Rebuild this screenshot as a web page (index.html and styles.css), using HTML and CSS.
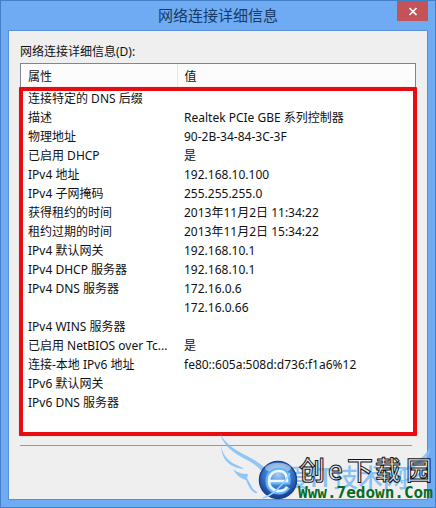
FILE: index.html
```html
<!DOCTYPE html>
<html lang="zh-CN">
<head>
<meta charset="utf-8">
<meta name="viewport" content="width=device-width, initial-scale=1">
<title>网络连接详细信息</title>
<link rel="stylesheet" href="styles.css">
</head>
<body>
<main class="window">
  <header class="titlebar">
    <h1 class="title">网络连接详细信息</h1>
    <button class="close" type="button" aria-label="关闭">
      <svg width="10" height="9" viewBox="0 0 10 9" aria-hidden="true"><path d="M1.500 1l7 7M8.500 1l-7 7" stroke="#fff" stroke-width="1.700" fill="none"/></svg>
    </button>
  </header>
  <section class="client">
    <h2 class="label" id="list-label">网络连接详细信息(D):</h2>
    <div class="list">
      <table class="details" aria-labelledby="list-label">
        <thead><tr><th class="prop">属性</th><th>值</th></tr></thead>
        <tbody>
          <tr><td>连接特定的 DNS 后缀</td><td></td></tr>
          <tr><td>描述</td><td>Realtek PCIe GBE 系列控制器</td></tr>
          <tr><td>物理地址</td><td>90-2B-34-84-3C-3F</td></tr>
          <tr><td>已启用 DHCP</td><td>是</td></tr>
          <tr><td>IPv4 地址</td><td>192.168.10.100</td></tr>
          <tr><td>IPv4 子网掩码</td><td>255.255.255.0</td></tr>
          <tr><td>获得租约的时间</td><td>2013年11月2日 11:34:22</td></tr>
          <tr><td>租约过期的时间</td><td>2013年11月2日 15:34:22</td></tr>
          <tr><td>IPv4 默认网关</td><td>192.168.10.1</td></tr>
          <tr><td>IPv4 DHCP 服务器</td><td>192.168.10.1</td></tr>
          <tr><td>IPv4 DNS 服务器</td><td>172.16.0.6</td></tr>
          <tr><td></td><td>172.16.0.66</td></tr>
          <tr><td>IPv4 WINS 服务器</td><td></td></tr>
          <tr><td>已启用 NetBIOS over Tc...</td><td>是</td></tr>
          <tr><td>连接-本地 IPv6 地址</td><td>fe80::605a:508d:d736:f1a6%12</td></tr>
          <tr><td>IPv6 默认网关</td><td></td></tr>
          <tr><td>IPv6 DNS 服务器</td><td></td></tr>
        </tbody>
      </table>
      <div class="highlight"></div>
    </div>
    <hr class="rule">
  </section>
  <svg class="watermark" width="216" height="76" viewBox="220 432 216 76" role="img" aria-label="创e下载园 Www.7edown.Com">
    <defs>
      <radialGradient id="globe" cx="50%" cy="35%" r="65%">
        <stop offset="0" stop-color="#a9cff3"/>
        <stop offset=".5" stop-color="#3f80cf"/>
        <stop offset="1" stop-color="#123b8c"/>
      </radialGradient>
    </defs>
    <g fill="#7fc0f7" opacity=".85">
      <path d="M220 433c4 10 15 17 27 23 9 5 16 9 21 15l-3 4c-6-8-12-12-20-16-13-7-22-14-25-26z"/>
      <path d="M221 445c1 11 9 18 20 22l3 2c-13-1-23-9-23-24z"/>
      <path d="M233 469c5 4 9 5 15 5l-1 4 6 11 5 4-3 0c-5-3-7-8-9-13-6-2-10-5-13-11z"/>
      <path d="M430 447c-5 10-17 18-32 25 12-2 22-7 29-14 3-4 4-7 3-11z"/>
      <path d="M428 464c-6 9-16 14-28 17 13 1 24-5 28-17z"/>
    </g>
    <text class="mark-under" x="260" y="487">我爱IT技术网</text>
    <circle cx="278" cy="480" r="18.500" fill="url(#globe)" stroke="#1b4193" stroke-width="1.500"/>
    <ellipse cx="278" cy="468" rx="13" ry="5" fill="#fff" opacity=".4"/>
    <path d="M268 482h20c1-8-3-12-9-12-7 0-11 5-11 11 0 7 5 11 11 11 4 0 7-2 9-5" fill="none" stroke="#66b3f5" stroke-width="5"/>
    <path d="M269 481h18c0-7-3-10-8-10-6 0-10 4-10 10s4 10 10 10c4 0 7-2 8-4" fill="none" stroke="#eef7ff" stroke-width="2.500"/>
    <path d="M263 498c8-2 20-12 27-25" fill="none" stroke="#9ad1fc" stroke-width="1.500"/>
    <text class="mark-name" y="480"><tspan x="299">创</tspan><tspan x="328">e</tspan><tspan x="347">下</tspan><tspan x="375">载</tspan><tspan x="406">园</tspan></text>
    <text class="mark-site" x="298" y="498">Www.7edown.Com</text>
  </svg>
</main>
</body>
</html>
```
FILE: styles.css
```css
* {
  box-sizing: border-box;
}

body {
  margin: 0;
  font: 12px/19px "Noto Sans", "Noto Sans CJK SC", sans-serif;
  color: #111;
}

.window {
  position: relative;
  display: flex;
  flex-direction: column;
  min-height: 100vh;
  padding: 0 7px 7px;
  background: #6eabf3;
  border: 1px solid #437fc7;
  overflow: hidden;
}

.titlebar {
  display: grid;
  grid-template-columns: 1fr auto 1fr;
  align-items: start;
  height: 29px;
}

.title {
  grid-column: 2;
  margin: 0;
  font-size: 15px;
  line-height: 28px;
  font-weight: 400;
  color: #173a64;
}

.close {
  justify-self: end;
  display: flex;
  align-items: center;
  justify-content: center;
  width: 31px;
  height: 20px;
  padding: 0;
  border: 0;
  background: #c45358;
}

.client {
  flex: 1;
  padding: 11px 11px 0;
  background: #efefef;
  border: 1px solid #5790d4;
}

.label {
  margin: 0 0 2px;
  font: inherit;
}

.list {
  position: relative;
  height: 370px;
  background: #fff;
  border: 1px solid #82858e;
  border-bottom: 0;
}

.details {
  width: 100%;
  border-collapse: collapse;
  table-layout: fixed;
}

.details th,
.details td {
  height: 19px;
  padding: 0 0 0 7px;
  text-align: left;
  font-weight: 400;
  white-space: nowrap;
}

.details th {
  height: 25px;
  background: #fcfcfc;
}

.details .prop {
  width: 156px;
  border-right: 1px solid #e3e8ef;
}

.highlight {
  position: absolute;
  inset: 23px -2px -3px;
  border: 4px solid #e80c10;
  border-radius: 1px;
  box-shadow: 0 0 1px #ff7777;
}

.rule {
  margin: 12px 4px 0 0;
  border: 0;
  border-top: 1px solid #9299a8;
}

.watermark {
  position: absolute;
  right: -1px;
  bottom: -1px;
}

.mark-under {
  font: 500 25px "Noto Sans CJK SC", sans-serif;
  fill: #6eb8f3;
  opacity: 0.8;
}

.mark-name {
  font: 500 26px "Noto Sans CJK SC", sans-serif;
  fill: #e6eff7;
  fill-opacity: 0.6;
  stroke: #141414;
  stroke-width: 1px;
}

.mark-site {
  font: 700 16px "DejaVu Sans Mono", monospace;
  fill: #086b22;
}
```
